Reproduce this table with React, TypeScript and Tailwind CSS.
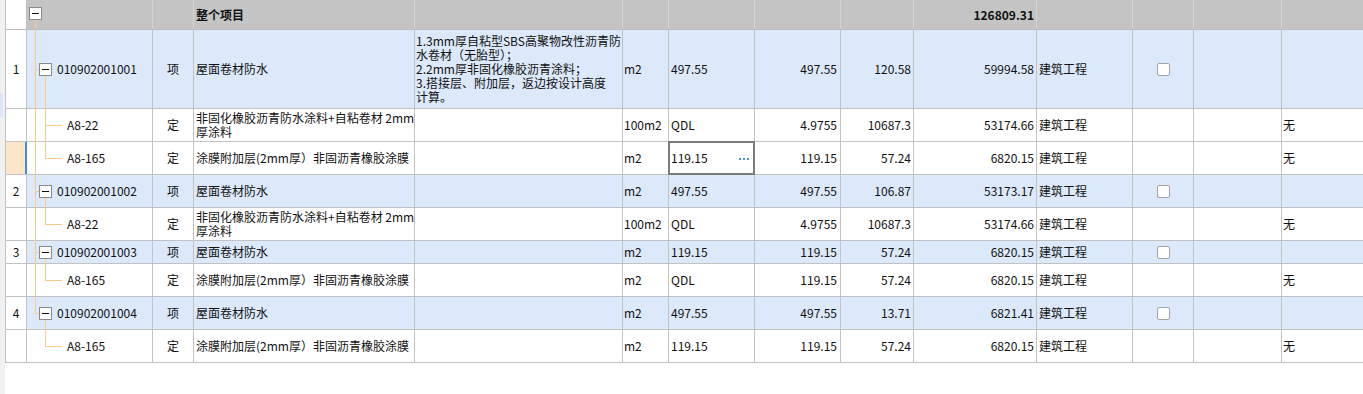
import React from "react";

type Row = {
  h: string;
  num?: string;
  kind: "l1" | "child";
  last?: boolean;
  hasKids?: boolean;
  root: "full" | "half" | "none";
  code: string;
  type: string;
  name: string[];
  desc?: string[];
  unit: string;
  expr: string;
  qty: string;
  price: string;
  total: string;
  prof: string;
  check?: boolean;
  wu?: boolean;
  selected?: boolean;
};

const rows: Row[] = [
  {
    h: "h-[79px]",
    num: "1",
    kind: "l1",
    hasKids: true,
    root: "full",
    code: "010902001001",
    type: "项",
    name: ["屋面卷材防水"],
    desc: [
      "1.3mm厚自粘型SBS高聚物改性沥青防",
      "水卷材（无胎型）；",
      "2.2mm厚非固化橡胶沥青涂料；",
      "3.搭接层、附加层，返边按设计高度",
      "计算。",
    ],
    unit: "m2",
    expr: "497.55",
    qty: "497.55",
    price: "120.58",
    total: "59994.58",
    prof: "建筑工程",
    check: true,
  },
  {
    h: "h-[33px]",
    kind: "child",
    root: "full",
    code: "A8-22",
    type: "定",
    name: ["非固化橡胶沥青防水涂料+自粘卷材 2mm", "厚涂料"],
    unit: "100m2",
    expr: "QDL",
    qty: "4.9755",
    price: "10687.3",
    total: "53174.66",
    prof: "建筑工程",
    wu: true,
  },
  {
    h: "h-[33px]",
    kind: "child",
    last: true,
    root: "full",
    code: "A8-165",
    type: "定",
    name: ["涂膜附加层(2mm厚）非固沥青橡胶涂膜"],
    unit: "m2",
    expr: "119.15",
    qty: "119.15",
    price: "57.24",
    total: "6820.15",
    prof: "建筑工程",
    wu: true,
    selected: true,
  },
  {
    h: "h-[33px]",
    num: "2",
    kind: "l1",
    hasKids: true,
    root: "full",
    code: "010902001002",
    type: "项",
    name: ["屋面卷材防水"],
    unit: "m2",
    expr: "497.55",
    qty: "497.55",
    price: "106.87",
    total: "53173.17",
    prof: "建筑工程",
    check: true,
  },
  {
    h: "h-[33px]",
    kind: "child",
    last: true,
    root: "full",
    code: "A8-22",
    type: "定",
    name: ["非固化橡胶沥青防水涂料+自粘卷材 2mm", "厚涂料"],
    unit: "100m2",
    expr: "QDL",
    qty: "4.9755",
    price: "10687.3",
    total: "53174.66",
    prof: "建筑工程",
    wu: true,
  },
  {
    h: "h-[23px]",
    num: "3",
    kind: "l1",
    hasKids: true,
    root: "full",
    code: "010902001003",
    type: "项",
    name: ["屋面卷材防水"],
    unit: "m2",
    expr: "119.15",
    qty: "119.15",
    price: "57.24",
    total: "6820.15",
    prof: "建筑工程",
    check: true,
  },
  {
    h: "h-[33px]",
    kind: "child",
    last: true,
    root: "full",
    code: "A8-165",
    type: "定",
    name: ["涂膜附加层(2mm厚）非固沥青橡胶涂膜"],
    unit: "m2",
    expr: "QDL",
    qty: "119.15",
    price: "57.24",
    total: "6820.15",
    prof: "建筑工程",
    wu: true,
  },
  {
    h: "h-[33px]",
    num: "4",
    kind: "l1",
    hasKids: true,
    root: "half",
    code: "010902001004",
    type: "项",
    name: ["屋面卷材防水"],
    unit: "m2",
    expr: "497.55",
    qty: "497.55",
    price: "13.71",
    total: "6821.41",
    prof: "建筑工程",
    check: true,
  },
  {
    h: "h-[33px]",
    kind: "child",
    last: true,
    root: "none",
    code: "A8-165",
    type: "定",
    name: ["涂膜附加层(2mm厚）非固沥青橡胶涂膜"],
    unit: "m2",
    expr: "119.15",
    qty: "119.15",
    price: "57.24",
    total: "6820.15",
    prof: "建筑工程",
    wu: true,
  },
];

const LINE = "bg-[#fbc98c]";

function MinusBox({ className }: { className: string }) {
  return (
    <div
      className={`absolute z-10 flex h-[13px] w-[13px] items-center justify-center border border-[#8a8a8a] bg-white ${className}`}
    >
      <div className="h-px w-[7px] bg-[#111]" />
    </div>
  );
}

function TreeCell({ r }: { r: Row }) {
  return (
    <div className="relative flex h-full w-[126px] shrink-0 items-center border-r border-[#c2c2c2]">
      {r.root === "full" && (
        <div className={`absolute left-[8px] top-0 bottom-[-1px] w-px ${LINE}`} />
      )}
      {r.root === "half" && (
        <div className={`absolute left-[8px] top-0 h-1/2 w-px ${LINE}`} />
      )}
      {r.kind === "l1" ? (
        <>
          <div className={`absolute left-[8px] top-1/2 h-px w-[5px] ${LINE}`} />
          {r.hasKids && (
            <div className={`absolute left-[18px] top-1/2 bottom-[-1px] w-px ${LINE}`} />
          )}
          <MinusBox className="left-[12px] top-1/2 -translate-y-[6px]" />
          <span className="pl-[30px] whitespace-nowrap">{r.code}</span>
        </>
      ) : (
        <>
          {r.last ? (
            <div className={`absolute left-[18px] top-0 h-1/2 w-px ${LINE}`} />
          ) : (
            <div className={`absolute left-[18px] top-0 bottom-[-1px] w-px ${LINE}`} />
          )}
          <div className={`absolute left-[18px] top-1/2 h-px w-[17px] ${LINE}`} />
          <span className="pl-[40px] whitespace-nowrap">{r.code}</span>
        </>
      )}
    </div>
  );
}

function BodyRow({ r }: { r: Row }) {
  const bg = r.kind === "l1" ? "bg-[#dce9fb]" : "bg-white";
  const cell = "relative flex h-full shrink-0 items-center border-r border-[#c2c2c2]";
  return (
    <div className={`flex ${r.h} border-b border-[#c2c2c2]`}>
      <div
        className={`${cell} w-[21px] justify-center ${
          r.selected ? "bg-[#fde6c7]" : "bg-white"
        }`}
      >
        {r.num}
        {r.selected && (
          <div className="absolute right-[-1px] top-0 bottom-0 w-[2px] bg-[#3a8ee8]" />
        )}
      </div>
      <div className={`flex h-full flex-1 ${bg}`}>
        <TreeCell r={r} />
        <div className={`${cell} w-[41px] justify-center`}>{r.type}</div>
        <div className={`${cell} w-[221px] pl-[2px]`}>
          <div className="leading-[14px] whitespace-nowrap">
            {r.name.map((t, i) => (
              <div key={i}>{t}</div>
            ))}
          </div>
        </div>
        <div className={`${cell} w-[208px] pl-[1px]`}>
          {r.desc && (
            <div className="leading-[14px] whitespace-nowrap">
              {r.desc.map((t, i) => (
                <div key={i}>{t}</div>
              ))}
            </div>
          )}
        </div>
        <div className={`${cell} w-[46px] pl-[1px]`}>{r.unit}</div>
        <div className={`${cell} w-[86px] pl-[2px]`}>
          {r.expr}
          {r.selected && (
            <>
              <div className="pointer-events-none absolute -left-px -top-px -right-px -bottom-px z-20 border-2 border-[#7c7c7c]" />
              <div className="absolute right-[5px] top-1/2 flex gap-[2px]">
                <div className="h-[2px] w-[2px] bg-[#4d95d9]" />
                <div className="h-[2px] w-[2px] bg-[#4d95d9]" />
                <div className="h-[2px] w-[2px] bg-[#4d95d9]" />
              </div>
            </>
          )}
        </div>
        <div className={`${cell} w-[86px] justify-end pr-[3px]`}>{r.qty}</div>
        <div className={`${cell} w-[73px] justify-end pr-[2px]`}>{r.price}</div>
        <div className={`${cell} w-[123px] justify-end pr-[2px]`}>{r.total}</div>
        <div className={`${cell} w-[96px] pl-[2px]`}>{r.prof}</div>
        <div className={`${cell} w-[61px] justify-center`}>
          {r.check && (
            <div className="h-[13px] w-[13px] rounded-[2px] border border-[#a3a3a3] bg-white" />
          )}
        </div>
        <div className={`${cell} w-[88px]`} />
        <div className="flex h-full flex-1 items-center pl-[1px]">{r.wu ? "无" : ""}</div>
      </div>
    </div>
  );
}

export default function App() {
  const hcell = "flex h-full shrink-0 items-center border-r border-[#d3d3d3]";
  return (
    <div className="flex h-[394px] w-[1363px] overflow-hidden bg-white font-['Noto_Sans_CJK_SC',sans-serif] text-[12px] text-[#111]">
      <div className="relative h-full w-[5px] shrink-0 bg-[#f1f1f1]">
        <div className="absolute left-0 top-[93px] h-[24px] w-[3px] bg-[#dbe7f7]" />
      </div>
      <div className="flex min-w-0 flex-1 flex-col self-start border-l border-[#c2c2c2]">
        <div className="flex h-[30px] border-b border-[#bdbdbd]">
          <div className="h-full w-[21px] shrink-0 border-r border-[#c2c2c2] bg-white" />
          <div className="flex h-full flex-1 bg-[#c4c4c4]">
            <div className={`${hcell} relative w-[126px]`}>
              <div className={`absolute left-[8px] top-[13px] bottom-[-1px] w-px ${LINE}`} />
              <MinusBox className="left-[2px] top-[7px]" />
            </div>
            <div className={`${hcell} w-[41px]`} />
            <div className={`${hcell} w-[221px] pl-[2px] font-bold`}>整个项目</div>
            <div className={`${hcell} w-[208px]`} />
            <div className={`${hcell} w-[46px]`} />
            <div className={`${hcell} w-[86px]`} />
            <div className={`${hcell} w-[86px]`} />
            <div className={`${hcell} w-[73px]`} />
            <div className={`${hcell} w-[123px] justify-end pr-[2px] font-bold`}>126809.31</div>
            <div className={`${hcell} w-[96px]`} />
            <div className={`${hcell} w-[61px]`} />
            <div className={`${hcell} w-[88px]`} />
            <div className="h-full flex-1" />
          </div>
        </div>
        {rows.map((r, i) => (
          <BodyRow key={i} r={r} />
        ))}
      </div>
    </div>
  );
}
